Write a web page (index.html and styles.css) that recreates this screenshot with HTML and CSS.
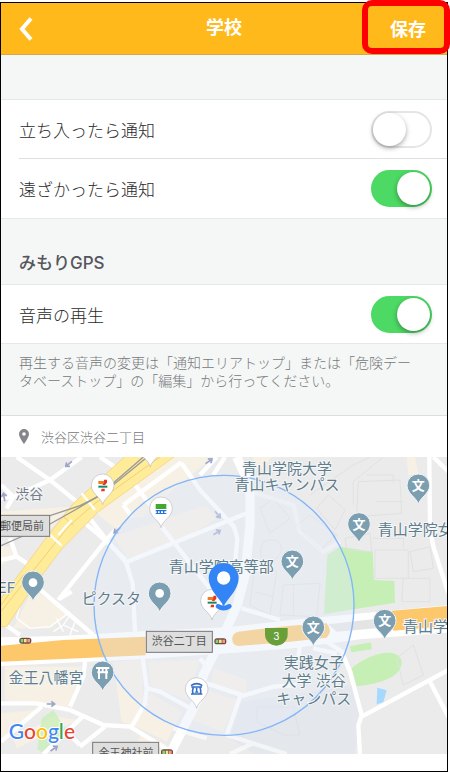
FILE: index.html
```html
<!DOCTYPE html>
<html lang="ja">
<head>
  <meta charset="UTF-8">
  <meta name="viewport" content="width=device-width, initial-scale=1.0">
  <title>学校</title>
  <link rel="stylesheet" href="styles.css">
</head>
<body>
  <div class="screen">
    <header class="navbar">
      <button type="button" class="back" aria-label="戻る">
        <svg width="16" height="24" viewBox="0 0 16 24"><path d="M13 1.500 4 12l9 10.500" fill="none" stroke="#fff" stroke-width="4"/></svg>
      </button>
      <h1>学校</h1>
      <button type="button" class="save">保存</button>
    </header>

    <main>
      <section class="group">
        <div class="row">
          <label for="notify-enter">立ち入ったら通知</label>
          <input type="checkbox" class="switch" id="notify-enter">
        </div>
        <div class="row">
          <label for="notify-leave">遠ざかったら通知</label>
          <input type="checkbox" class="switch" id="notify-leave" checked>
        </div>
      </section>

      <h2>みもりGPS</h2>
      <section class="group">
        <div class="row">
          <label for="play-voice">音声の再生</label>
          <input type="checkbox" class="switch" id="play-voice" checked>
        </div>
      </section>
      <p class="note">再生する音声の変更は「通知エリアトップ」または「危険データベーストップ」の「編集」から行ってください。</p>

      <div class="address">
        <svg width="10" height="15" viewBox="0 0 10 15"><path fill="#85858a" fill-rule="evenodd" d="M5 0a5 5 0 0 1 5 5c0 3.500-5 10-5 10S0 8.500 0 5a5 5 0 0 1 5-5zm0 3.200a1.800 1.800 0 1 0 0 3.600 1.800 1.800 0 0 0 0-3.600z"/></svg>
        <span>渋谷区渋谷二丁目</span>
      </div>

      <svg class="map" viewBox="3 6 1338 891" role="img" aria-label="地図">
        <defs>
          <path id="pin" d="M0 58C-4 36-34 26-34 0A34 34 0 1 1 34 0C34 26 4 36 0 58Z"/>
          <g id="seven">
            <path fill="#f47b20" d="M-13-14H8V-5H-13Z"/>
            <path fill="#e8352b" d="M4-18H13V-9L7-2H-1L4-9Z"/>
            <path fill="#158a62" d="M-13 0H14V6H-13Z"/>
            <path fill="#e8352b" d="M-3 9H6V17H-5Z"/>
          </g>
          <g id="signal">
            <rect x="-18" y="-9" width="36" height="18" rx="8" fill="#70483f"/>
            <rect x="-14" y="-5" width="8" height="10" fill="#7bd67b"/>
            <rect x="-4" y="-5" width="8" height="10" fill="#f4e77c"/>
            <rect x="6" y="-5" width="8" height="10" fill="#f59595"/>
          </g>
          <path id="arrow" d="M-14 0H6M0-8 10 0 0 8" fill="none" stroke="#9da3cb" stroke-width="5"/>
        </defs>

        <!-- blocks -->
        <rect x="3" y="6" width="1338" height="891" fill="#ebebeb"/>
        <g fill="#f7f1e5">
          <path d="M520 6H640L490 130 430 185 380 190 350 225 290 175 400 90Z"/>
          <path d="M340 245 620 150 650 190 510 280 385 310Z"/>
          <path d="M3 170 210 155 150 225 3 240ZM3 275 40 275 45 305 3 330Z"/>
          <path d="M100 400 205 480 150 520 40 520Z"/>
          <path d="M15 635H245L235 680 200 770 15 735Z"/>
          <path d="M340 620 425 615 430 740 390 810 365 800Z"/>
          <path d="M445 620 600 615 560 735 450 690ZM450 715 545 770 500 860 400 810Z"/>
          <path d="M640 640 740 675 740 720 635 685ZM600 700 710 735 670 830 560 790Z"/>
          <path d="M3 775 110 765 3 850ZM160 785 235 795 50 880 40 850Z"/>
          <path d="M1220 6H1245L1255 60H1225ZM760 6H815L790 40 755 45Z"/>
          <path d="M400 897 425 830 500 870 490 897Z"/>
        </g>
        <g fill="#c5efb5">
          <path d="M982 300 1020 275 1118 290 1122 375 1183 378 1185 443 972 477Z"/>
          <path d="M1055 640C1100 600 1190 570 1205 618 1208 668 1135 688 1070 693Z"/>
          <path d="M1050 574 1113 562 1115 583 1054 592Z"/>
          <path d="M112 882 125 790 160 765 205 835 130 895Z" opacity=".7"/>
        </g>
        <path fill="#a6d9ff" d="M1132 698 1160 706 1150 742 1130 748Z"/>
        <path fill="#e4e7eb" d="M725 740 800 730 1060 690 1080 790 1065 897H760L690 850Z"/>

        <!-- building outlines -->
        <g class="outline">
          <path d="M780 160 820 130 870 190 810 235ZM790 260C840 240 860 280 830 310 790 340 770 300 790 260Z"/>
          <path d="M890 210 930 180 1010 240 960 285ZM950 160 985 120 1035 165 1005 225Z"/>
          <path d="M765 330 830 350 810 480 750 450ZM850 390 960 385 950 485 840 480Z"/>
          <path d="M1035 250 1110 235 1115 290 1040 285ZM1075 80 1200 75 1205 175 1070 185ZM1100 60H1180V85"/>
          <path d="M1125 285 1225 285V370H1125ZM1230 290 1290 275 1300 340 1240 350ZM1210 370 1290 370V440H1205Z"/>
          <path d="M1060 150 1060 80 1150 6M930 120 1060 30 1110 6M1130 140H1210"/>
          <path d="M1190 610 1240 570 1270 660 1210 690ZM770 800V755H880L900 840H850Z"/>
          <path d="M880 390V480M765 410 820 425M1120 250H1210V280"/>
        </g>

        <!-- streets -->
        <g class="street">
          <path d="M50 6 150 75 230 140 320 255 378 322 398 385 405 530"/>
          <path d="M245 6 150 75 40 125 3 130"/>
          <path d="M300 6 365 50M250 200 320 260M378 315 315 255M315 260 175 435M345 225 315 260"/>
          <path d="M40 125 3 90M40 125 20 160M3 315 50 305 110 345M50 305 30 250"/>
          <path d="M378 322 740 175M545 25 600 105 702 215 712 250 705 325"/>
          <path d="M370 150 545 22M370 150 395 185M395 75 450 150M650 6 600 60M640 60 675 6"/>
          <path d="M485 215 660 440M725 460 840 495"/>
          <path d="M110 395 280 540M180 430 215 410M3 500 60 540"/>
          <path d="M1288 6 1290 220 1300 275 1345 415M1300 6 1345 50"/>
          <path d="M750 110 880 150 900 230 970 290 1020 260" opacity=".4"/>
          <path d="M428 605 440 700 435 745 395 815M255 620 250 665 210 755"/>
          <path d="M3 745 110 745 210 765 310 810 390 815 505 885"/>
          <path d="M125 755 3 860M248 785 130 897M315 815 240 875M200 830 240 870"/>
          <path d="M443 700 480 710 590 770M620 685 730 722 820 695 890 690M720 725 680 840"/>
          <path d="M900 570 895 610M940 580 1010 595M600 610 625 640"/>
          <path d="M980 560 1025 590 1050 650 1085 780 1075 812 1080 897M1085 785 1345 645M1290 680 1345 785"/>
          <path d="M520 820 620 850M680 840 860 897M690 897 760 865" opacity=".6"/>
        </g>
        <path class="avenue" d="M710 6 735 60 750 110V210L735 360 712 450 675 530 610 660 590 740 510 897"/>
        <g class="path">
          <path d="M60 450 50 490 90 520 150 515 210 470M170 490 190 530M210 480 190 510 235 530M190 510 160 530M225 500 210 540"/>
        </g>

        <!-- expressways -->
        <path fill="#fff" d="M3 547 180 543 437 528 690 516 870 495 1341 451V533L1080 553 880 580 640 598 430 612 3 633Z"/>
        <path fill="#e4e4e4" d="M985 508 1170 487 1180 515 1010 530Z"/>
        <g class="orange">
          <path d="M3 572 190 555 437 545V601L3 620Z"/>
          <path d="M715 530 870 512 980 505Q1000 530 980 548L870 560 715 573Q695 570 697 550 697 535 715 530Z"/>
          <path d="M1175 467 1341 453V513L1180 527Z"/>
        </g>
        <path class="yellow" d="M380 0 220 145 130 260 3 430V515H20L95 402 185 282 295 170 530 0Z"/>
        <path fill="none" stroke="#f4cf73" stroke-width="3" d="M480 6 285 145 205 215 105 340 3 470M190 185 220 210M70 360 3 450"/>
        <path fill="none" stroke="#fff" stroke-width="7" d="M245 115 285 165M145 235 185 272M175 240 215 195"/>
        <g class="railway">
          <path d="M430 6 292 125 225 165 150 207 3 272"/>
          <path d="M442 6 300 122 240 152 150 182 3 200"/>
        </g>

        <g>
          <use href="#arrow" transform="translate(205 28) rotate(140)"/>
          <use href="#arrow" transform="translate(12 125) rotate(-100)"/>
          <use href="#arrow" transform="translate(628 18) rotate(-35)"/>
          <use href="#arrow" transform="translate(654 180) rotate(52)"/>
          <use href="#arrow" transform="translate(652 232) rotate(-32)"/>
          <use href="#arrow" transform="translate(350 227) rotate(140)"/>
          <use href="#arrow" transform="translate(154 747)"/>
          <use href="#arrow" transform="translate(163 880) rotate(-35)"/>
        </g>

        <circle class="area" cx="672" cy="451" r="390"/>

        <!-- place names -->
        <g class="place">
          <text class="district" x="88" y="132">渋谷</text>
          <text x="861" y="58">青山学院大学</text>
          <text x="861" y="104">青山キャンパス</text>
          <text x="664" y="352">青山学院高等部</text>
          <text x="334" y="447">ピクスタ</text>
          <text x="138" y="684">金王八幡宮</text>
          <text x="20" y="415">EF</text>
          <text x="1246" y="239">青山学院女</text>
          <text x="1299" y="530">青山学院</text>
          <text x="941" y="640">実践女子</text>
          <text x="941" y="694">大学 渋谷</text>
          <text x="941" y="747">キャンパス</text>
        </g>

        <!-- crossings -->
        <g class="crossing">
          <rect x="-20" y="181" width="169" height="63"/>
          <text x="66" y="224">郵便局前</text>
          <rect x="439" y="529" width="198" height="63"/>
          <text x="538" y="571">渋谷二丁目</text>
          <rect x="278" y="862" width="198" height="63"/>
          <text x="378" y="905">金王神社前</text>
        </g>
        <use href="#signal" x="76" y="557"/>
        <use href="#signal" x="661" y="559"/>
        <use href="#signal" x="501" y="892"/>
        <path fill="#689f38" d="M795 519H863V538A34 34 0 0 1 795 538Z"/>
        <text class="route" x="829" y="554">3</text>

        <!-- places -->
        <g class="pin-slate">
          <use href="#pin" x="99" y="382"/>
          <use href="#pin" x="479" y="415"/>
          <use href="#pin" x="308" y="652"/>
          <use href="#pin" x="1255" y="91"/>
          <use href="#pin" x="1077" y="207"/>
          <use href="#pin" x="877" y="319"/>
          <use href="#pin" x="940" y="517"/>
          <use href="#pin" x="1154" y="497"/>
        </g>
        <circle cx="99" cy="383" r="13" fill="#fff"/>
        <circle cx="479" cy="415" r="13" fill="#fff"/>
        <path fill="none" stroke="#fff" stroke-width="6" d="M288 639H328M292 652H324M297 639V672M319 639V672M308 639V652"/>
        <g class="school">
          <text x="1255" y="105">文</text>
          <text x="1077" y="221">文</text>
          <text x="877" y="333">文</text>
          <text x="940" y="531">文</text>
          <text x="1154" y="511">文</text>
        </g>
        <g class="pin-white">
          <use href="#pin" x="451" y="-22"/>
          <use href="#pin" x="308" y="91"/>
          <use href="#pin" x="483" y="160"/>
          <use href="#pin" x="636" y="437"/>
          <use href="#pin" x="590" y="702"/>
        </g>
        <use href="#seven" x="308" y="92"/>
        <use href="#seven" x="636" y="440"/>
        <path fill="#43a832" d="M467 147H499V162H467Z"/>
        <path fill="#2673dc" d="M467 165H499V169H467ZM467 174H499V177H467ZM470 169H474V174H470ZM479 169H483V174H479ZM489 169H493V174H489Z"/>
        <g fill="none" stroke="#356fc6" stroke-width="5">
          <path d="M573 692Q590 680 607 692M574 696H606M580 696Q576 708 579 717M600 696Q604 708 601 717M573 717H607"/>
          <path fill="#356fc6" stroke="none" d="M583 713Q590 710 587 700 590 696 593 700 590 710 597 713Z"/>
        </g>

        <!-- selected point -->
        <path class="selected-base" d="M654 454Q671 465 688 454"/>
        <circle cx="671" cy="369" r="22" fill="#fff"/>
        <path class="selected" fill-rule="evenodd" d="M671 454C660 430 626 405 626 369A45 45 0 1 1 716 369C716 405 682 430 671 454ZM671 349A20 20 0 1 0 671 389 20 20 0 1 0 671 349Z"/>

        <text class="logo" x="26" y="853"><tspan fill="#4285f4">G</tspan><tspan fill="#ea4335">o</tspan><tspan fill="#fbbc05">o</tspan><tspan fill="#4285f4">g</tspan><tspan fill="#34a853">l</tspan><tspan fill="#ea4335">e</tspan></text>
      </svg>
    </main>
  </div>
</body>
</html>
```
FILE: styles.css
```css
* {
  margin: 0;
  padding: 0;
  box-sizing: border-box;
}
body {
  font-family: Inter, "Noto Sans CJK JP", sans-serif;
  background: #fff;
  color: #2b2b2b;
  min-height: 100vh;
  padding: 2px 2px 0 0;
  display: flex;
}
.screen {
  flex: 1;
  min-width: 0;
  border: 1px solid #000;
}
.navbar {
  display: grid;
  grid-template-columns: 1fr auto 1fr;
  align-items: center;
  height: 52px;
  background: #ffb91a;
  border-bottom: 1px solid #d0a950;
  color: #fff;
}
.navbar h1 {
  font-size: 18px;
  line-height: 24px;
  padding-bottom: 2px;
  font-weight: 700;
}
.navbar button {
  height: 51px;
  background: none;
  border: none;
  color: #fff;
  font: inherit;
  cursor: pointer;
}
.back {
  justify-self: start;
  display: flex;
  align-items: center;
  padding: 0 17px;
}
.navbar .save {
  position: relative;
  justify-self: end;
  padding: 0 21px 2px;
  font-size: 18px;
  font-weight: 700;
}
.save::after {
  content: "";
  position: absolute;
  inset: -3px -3px 0 -7px;
  border: 6px solid #f00;
  border-radius: 10px;
}
main {
  background: #f5f7f7;
  padding-top: 44px;
}
.group {
  background: #fff;
  border-top: 1px solid #e4e8e8;
  border-bottom: 1px solid #e4e8e8;
  padding-left: 18px;
}
.row {
  display: flex;
  justify-content: space-between;
  align-items: center;
  height: 58px;
  padding-right: 15px;
  font-size: 17px;
  font-weight: 300;
}
.row + .row {
  height: 60px;
  border-top: 1px solid #dedfe1;
}
.switch {
  appearance: none;
  position: relative;
  width: 61px;
  height: 37px;
  border: 2px solid #e5e5e5;
  border-radius: 19px;
  background: #fff;
  cursor: pointer;
}
.switch::before {
  content: "";
  display: block;
  width: 33px;
  height: 33px;
  border-radius: 50%;
  background: #fff;
  box-shadow: 0 2px 5px rgba(0, 0, 0, 0.35);
}
.switch:checked {
  background: #4cd964;
  border-color: #4cd964;
}
.switch:checked::before {
  margin-left: auto;
}
h2 {
  padding: 32px 18px 8px;
  font-size: 17px;
  line-height: 25px;
  font-weight: 500;
  color: #55555c;
}
.note {
  padding: 10px 24px 25px 18px;
  font-size: 14px;
  line-height: 18px;
  font-weight: 300;
  color: #77777a;
}
.address {
  display: flex;
  align-items: center;
  gap: 12px;
  height: 42px;
  padding: 0 18px;
  background: #fff;
  border-top: 1px solid #dcdede;
  font-size: 13px;
  font-weight: 300;
  color: #77777a;
}
.map {
  display: block;
  width: 100%;
  height: auto;
}

/* map */
.map text {
  text-anchor: middle;
}
.outline {
  fill: none;
  stroke: #e0e1e2;
  stroke-width: 3;
}
.street,
.avenue,
.path {
  fill: none;
  stroke: #fff;
  stroke-width: 13;
  stroke-linejoin: round;
}
.avenue {
  stroke-width: 28;
}
.path {
  stroke-width: 4;
}
.orange {
  fill: #fdc76b;
}
.yellow {
  fill: #ffec9a;
  stroke: #f6d88b;
  stroke-width: 3;
}
.railway {
  fill: none;
  stroke: #999;
  stroke-width: 4;
}
.area {
  fill: rgba(228, 234, 247, 0.4);
  stroke: #82b5fb;
  stroke-width: 4;
}
.place {
  font-size: 45px;
  fill: #607d8b;
  stroke: #f5f6f8;
  stroke-width: 6;
  paint-order: stroke;
}
.district {
  font-size: 42px;
  fill: #747b88;
}
.crossing rect {
  fill: #dedede;
  stroke: #777;
  stroke-width: 3;
}
.crossing text {
  font-size: 33px;
  fill: #555;
}
.route {
  font-size: 30px;
  fill: #fff;
}
.pin-slate {
  fill: #7b9eb0;
  stroke: #f3f5f7;
  stroke-width: 3;
}
.pin-white {
  fill: #fff;
  stroke: #b9bbc0;
  stroke-width: 2;
}
.school {
  font-size: 39px;
  font-weight: 700;
  fill: #fff;
}
.selected {
  fill: #3385f5;
}
.selected-base {
  fill: none;
  stroke: #3385f5;
  stroke-width: 14;
  stroke-linecap: round;
}
.map .logo {
  font-family: Lato, sans-serif;
  font-size: 63px;
  font-weight: 500;
  text-anchor: start;
  stroke: #fff;
  stroke-width: 6;
  paint-order: stroke;
}
```
